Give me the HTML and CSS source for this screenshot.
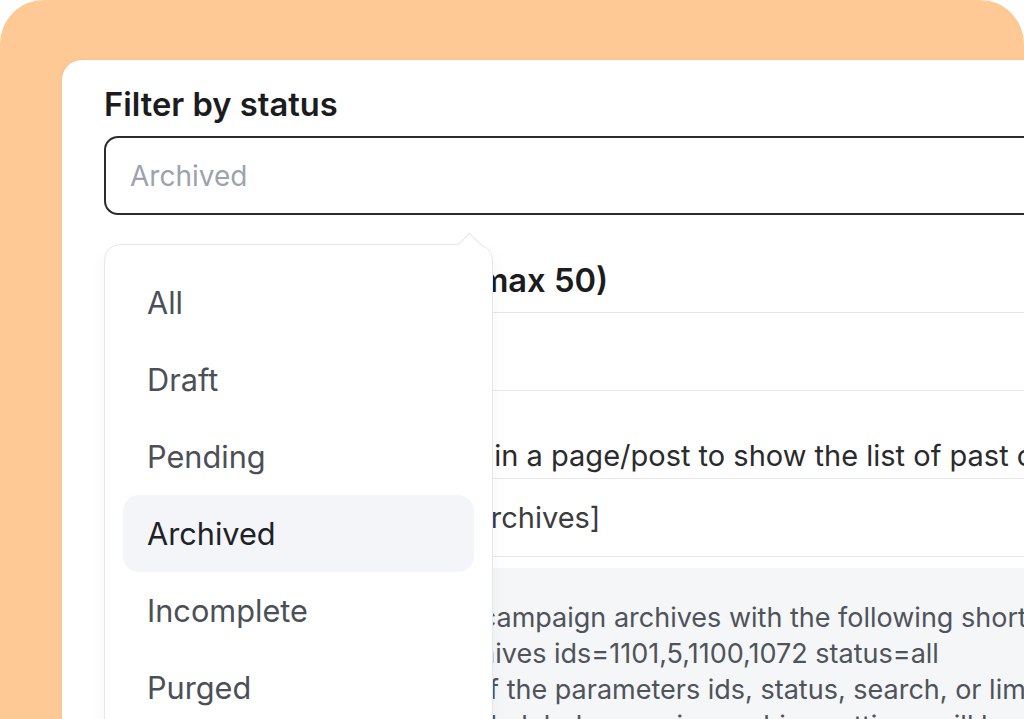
FILE: index.html
```html
<!DOCTYPE html>
<html lang="en">
<head>
<meta charset="utf-8">
<title>Filter by status</title>
<link rel="stylesheet" href="styles.css">
</head>
<body>
<div class="frame">
  <div class="card">
    <div class="field">
      <label class="label">Filter by status</label>
      <div class="select">
        <span class="placeholder">Archived</span>
      </div>
      <div class="dropdown">
        <span class="caret"></span>
        <ul class="options">
          <li class="option">All</li>
          <li class="option">Draft</li>
          <li class="option">Pending</li>
          <li class="option selected">Archived</li>
          <li class="option">Incomplete</li>
          <li class="option">Purged</li>
        </ul>
      </div>
    </div>

    <div class="field field-limit">
      <label class="label">Number of campaigns (max 50)</label>
      <div class="input"></div>
    </div>

    <div class="field field-shortcode">
      <p class="desc">Use this shortcode in a page/post to show the list of past campaigns.</p>
      <div class="input"><span class="value">[mailchimp_campaign_archives]</span></div>
    </div>

    <div class="note">
      <p class="note-line l1">You can also show specific campaign archives with the following shortcode:</p>
      <p class="note-line l2">[mailchimp_campaign_archives ids=1101,5,1100,1072 status=all</p>
      <p class="note-line l3">If you do not specify any of the parameters ids, status, search, or limit, the</p>
      <p class="note-line l4">default and global campaign archive settings will be used.</p>
    </div>
  </div>
</div>
</body>
</html>
```
FILE: styles.css
```css
* { box-sizing: border-box; }
html, body {
  margin: 0;
  padding: 0;
  background: #ffffff;
  font-family: Inter, "Noto Sans", "Liberation Sans", sans-serif;
}
.frame {
  height: 719px;
  overflow: hidden;
  background: #fec995;
  border-radius: 44px 44px 0 0;
  padding: 60px 0 0 62px;
}
.card {
  width: 1200px;
  height: 900px;
  background: #ffffff;
  border-radius: 20px 0 0 0;
  padding: 24px 0 0 42px;
  box-shadow: 0 0 6px rgba(0, 0, 0, 0.04);
}
.field {
  position: relative;
  display: flex;
  flex-direction: column;
  width: 1100px;
}
.label {
  font-size: 32.7px;
  line-height: 40px;
  font-weight: 600;
  color: #1c1c1e;
  margin-bottom: 12px;
}
.select {
  height: 79px;
  border: 2px solid #2b2b2b;
  border-radius: 14px;
  padding: 0 24px;
  display: flex;
  align-items: center;
}
.placeholder {
  font-size: 28px;
  color: #9ca3af;
}
.dropdown {
  position: absolute;
  top: 160px;
  left: 0;
  width: 389px;
  height: 560px;
  background: #ffffff;
  border: 1.5px solid #e6e7ea;
  border-radius: 16px;
  padding: 19px 18px;
  box-shadow: 0 6px 18px rgba(0, 0, 0, 0.04);
  z-index: 2;
}
.caret {
  position: absolute;
  top: -9px;
  left: 356px;
  width: 17px;
  height: 17px;
  background: #ffffff;
  border-top: 1.5px solid #e6e7ea;
  border-left: 1.5px solid #e6e7ea;
  transform: rotate(45deg);
}
.options {
  list-style: none;
  margin: 0;
  padding: 0;
  display: flex;
  flex-direction: column;
}
.option {
  height: 77px;
  display: flex;
  align-items: center;
  padding: 0 24px;
  border-radius: 16px;
  font-size: 30.7px;
  color: #4b5058;
}
.option.selected {
  background: #f4f5f8;
  color: #202226;
}
.field-limit {
  margin-top: 47px;
}
.field-limit .label {
  white-space: nowrap;
  line-height: 36px;
  margin-bottom: 14px;
  text-indent: 4px;
}
.input {
  height: 79px;
  border: 1.5px solid #e6e7ea;
  border-radius: 14px;
  padding: 0 24px;
  display: flex;
  align-items: center;
}
.field-shortcode {
  margin-top: 47px;
}
.desc {
  margin: 0 0 4px;
  font-size: 29px;
  line-height: 36px;
  color: #2a2b2e;
  white-space: nowrap;
  text-indent: 124px;
}
.value {
  margin-left: 34px;
  font-size: 29px;
  color: #3a3c40;
  white-space: nowrap;
}
.note {
  margin-top: 11px;
  width: 1100px;
  background: #f5f6f8;
  border-radius: 14px;
  padding: 32px 26px;
}
.note-line {
  margin: 0;
  font-size: 27px;
  line-height: 36px;
  color: #4f535a;
  white-space: nowrap;
}
.l1 { text-indent: -3px; }
.l2 { text-indent: 19px; }
.l3 { text-indent: 20px; }
.l4 { text-indent: 223px; }
```
